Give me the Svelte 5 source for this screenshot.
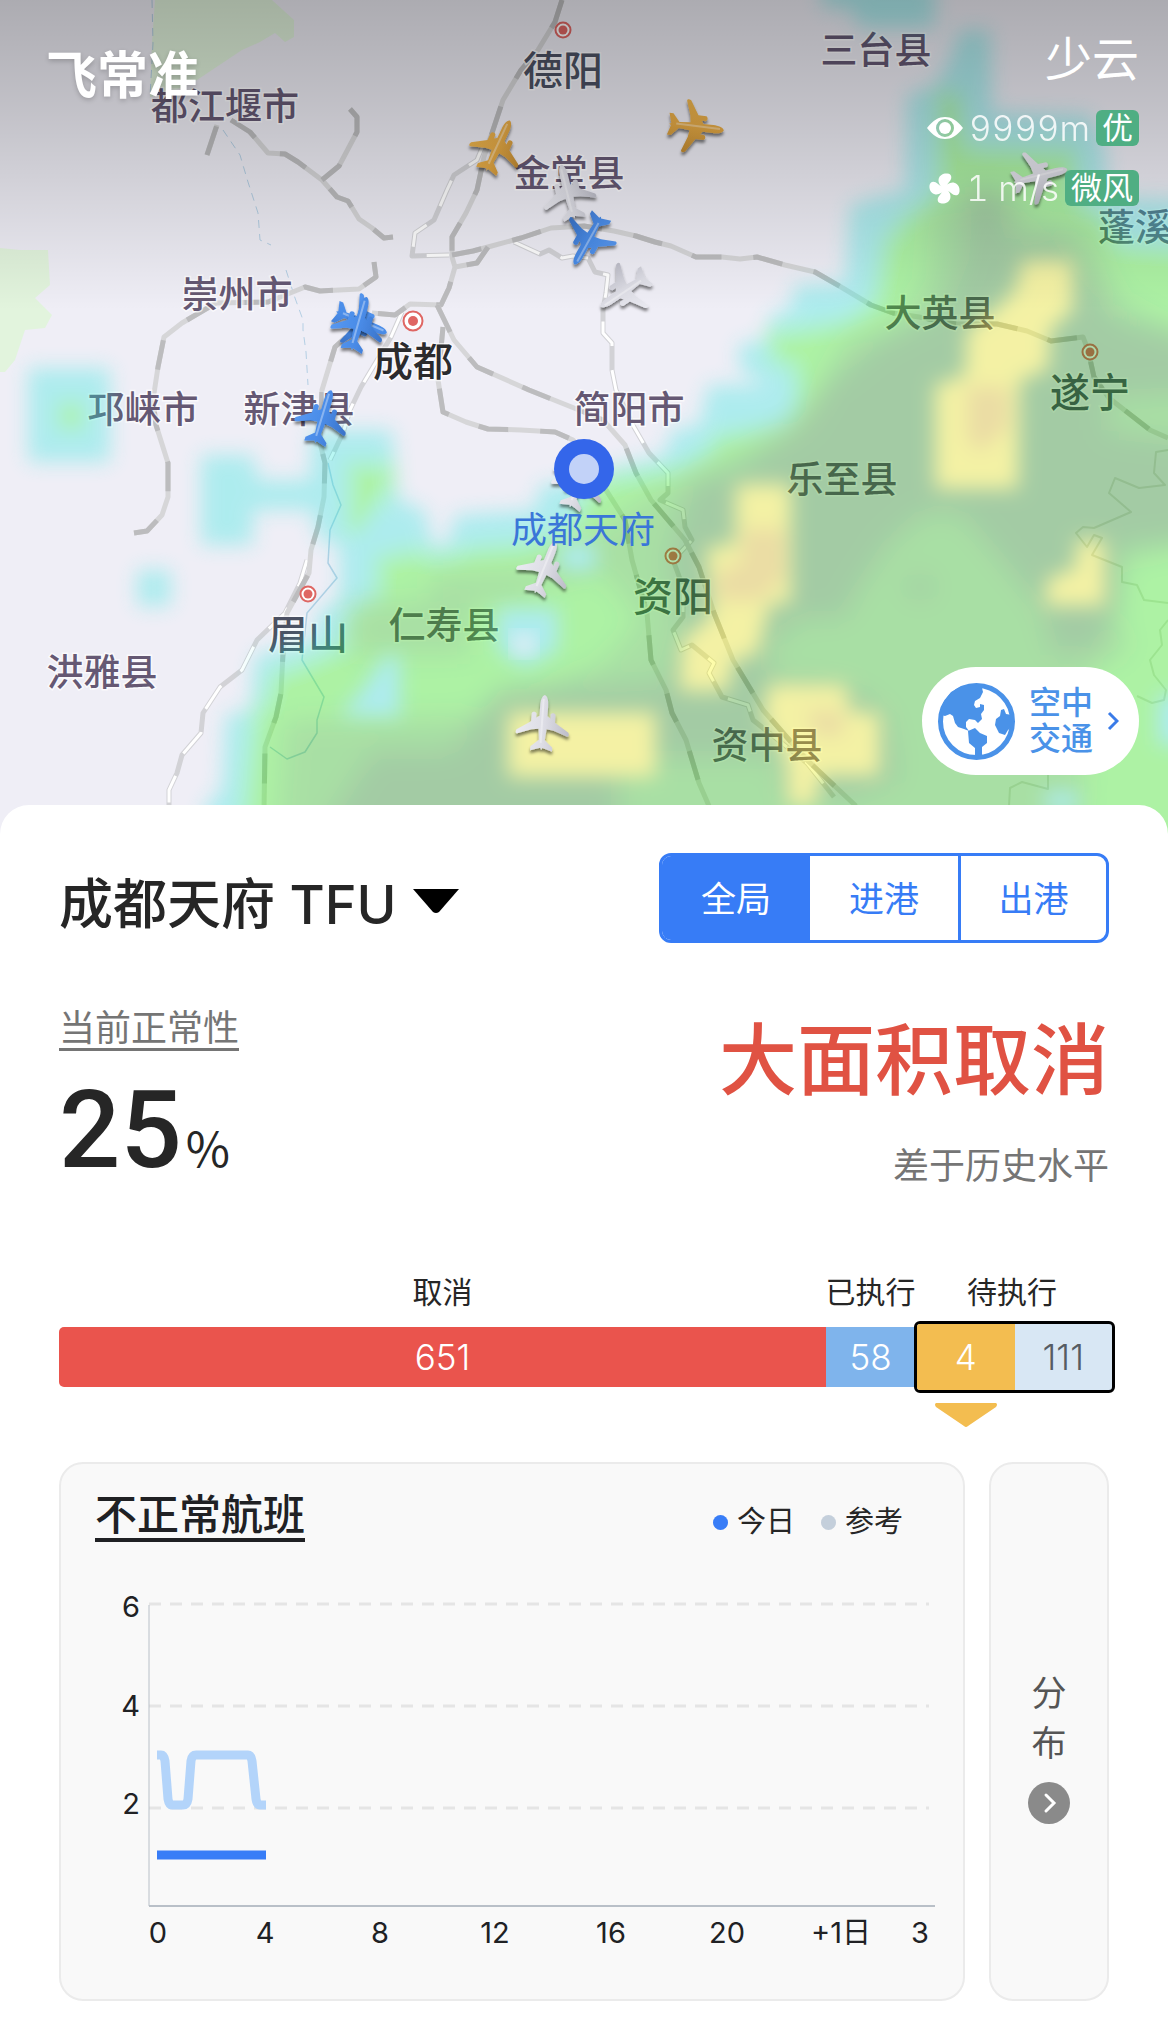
<script>
let activeTab = $state('全局')
const tabs = ['全局', '进港', '出港']

// county = small label, city = larger label with a dot
const counties = [
    ['三台县', 876, 51], ['都江堰市', 225, 107], ['金堂县', 569, 174], ['崇州市', 237, 295],
    ['邛崃市', 143, 410], ['新津县', 299, 410], ['简阳市', 629, 410], ['大英县', 940, 314],
    ['蓬溪', 1135, 228], ['乐至县', 842, 480], ['仁寿县', 444, 626], ['洪雅县', 102, 673],
    ['资中县', 767, 746]
]
const cities = [
    { name: '德阳', x: 563, y: 70, dot: [563, 30] },
    { name: '遂宁', x: 1090, y: 392, dot: [1090, 352] },
    { name: '资阳', x: 673, y: 596, dot: [673, 556] },
    { name: '眉山', x: 308, y: 634, dot: [308, 594] }
]

const planes = [
    { x: 498, y: 146, heading: 25, kind: 'gold' },
    { x: 696, y: 127, heading: 97, kind: 'gold' },
    { x: 568, y: 192, heading: -14, kind: 'white' },
    { x: 588, y: 240, heading: 209, kind: 'blue' },
    { x: 624, y: 291, heading: 236, kind: 'white' },
    { x: 361, y: 322, heading: 113, kind: 'blue' },
    { x: 359, y: 324, heading: 16, kind: 'blue' },
    { x: 323, y: 417, heading: 17, kind: 'blue' },
    { x: 582, y: 466, heading: 15, kind: 'white' },
    { x: 580, y: 482, heading: 22, kind: 'white' },
    { x: 545, y: 568, heading: 22, kind: 'white' },
    { x: 543, y: 723, heading: 4, kind: 'white' },
    { x: 1040, y: 176, heading: 76, kind: 'white' }
]

const roads = [
    '207,155 217,125',
    '231,120 250,132 268,153 285,154 298,162 322,180 337,197 348,201 359,219 372,228 384,238 393,237',
    '350,109 357,117 357,132 339,166 322,180',
    '562,0 555,22 538,50 521,70 503,100 493,130 484,157 477,190 466,213 452,237 452,257 455,267 449,288 441,305 410,304 395,315 372,313',
    '346,337 335,347 322,390 320,443 325,463 324,497 318,527 311,550 309,573 287,613 283,653 281,693 276,717 265,747 264,810',
    '452,255 473,251 488,247 521,238 551,228 584,226 614,231 636,236 655,242 671,246 696,257 722,257 740,259 757,257 785,265 815,272 841,287 871,305 893,313 919,317 956,324 997,324 1027,331 1051,341 1083,337 1088,350 1094,377 1109,398 1150,430 1168,438',
    '488,247 477,263 455,267',
    '437,305 454,340 477,367 529,390 584,412 603,420 625,445 636,473 651,500 685,540 699,567 714,613 733,660 763,710 807,760 856,806',
    '443,327 438,380 443,412 466,422 488,429 521,430 555,432 573,440 606,490 625,520 632,560 647,613 651,660 666,690 672,713 686,740 699,783 709,806',
    '374,262 376,277 359,289 320,291 305,287 268,302 216,303 182,323 164,337 158,367 153,400 156,425 168,463 168,497 162,515 147,531 134,533'
]
const railways = [
    '484,143 477,160 454,175 447,190 434,220 415,233 412,256 449,255',
    '402,312 391,337 361,387 350,410 343,433 330,460',
    '307,560 300,583 285,613 257,640 242,670 220,687 203,713 201,733 182,755 177,773 169,790 169,810',
    '514,242 540,254 549,250 562,258 573,256 588,258 595,272 608,275 606,293 603,310 603,333 612,343 612,370 616,390 634,427 649,453 668,473 668,493 660,500 683,510 685,527 692,540 673,560 683,587 683,617 673,630 681,650 692,645 714,663 709,673 722,697 748,705 753,720 807,763 834,797'
]
const rivers = [
    '328,463 333,485 341,505 330,530 328,563 337,578 307,613 302,660 324,697 317,720 317,733 305,752 287,759 270,747'
]
const streams = [
    '152,0 153,43 150,97',
    '223,130 240,155 248,182 258,213 260,240 271,245',
    '286,270 295,298 303,320 303,330 306,352 308,385'
]
const borders = [
    '1168,450 1156,452 1154,473 1165,485 1139,488 1115,478 1109,493 1131,512 1094,528 1083,527 1076,533 1087,547 1094,535 1102,538 1092,555 1122,567 1122,582 1137,585 1144,600 1168,603',
    '1168,620 1160,630 1162,645 1150,660 1154,675 1166,690 1164,700 1152,703 1137,696',
    '1009,806 1010,788 1022,782 1048,789 1048,775'
]

// value, line y, label baseline
const yTicks = [[6, 24, 37], [4, 126, 136], [2, 228, 234]]
const xTicks = [['0', 63], ['4', 170], ['8', 285], ['12', 400], ['16', 516], ['20', 632], ['+1日', 746], ['3', 825]]
</script>

<main>
    <section class="map">
        <svg class="map-canvas" viewBox="0 0 1168 834" preserveAspectRatio="xMidYMin slice">
            <defs>
                <filter id="soft" x="-20%" y="-20%" width="140%" height="140%">
                    <feGaussianBlur stdDeviation="10" />
                </filter>
                <filter id="softer" x="-20%" y="-20%" width="140%" height="140%">
                    <feGaussianBlur stdDeviation="14" />
                </filter>
                <filter id="drop" x="-30%" y="-30%" width="160%" height="160%">
                    <feDropShadow dx="0" dy="3" stdDeviation="1.5" flood-opacity="0.5" />
                </filter>
                <linearGradient id="shade" x1="0" y1="0" x2="0" y2="1">
                    <stop offset="0" stop-color="#000" stop-opacity="0.28" />
                    <stop offset="0.35" stop-color="#000" stop-opacity="0.19" />
                    <stop offset="1" stop-color="#000" stop-opacity="0" />
                </linearGradient>
                <linearGradient id="white" x1="0" x2="1"><stop offset="0" stop-color="#eaeaf1" /><stop offset="0.5" stop-color="#dedee6" /><stop offset="1" stop-color="#bdbdc8" /></linearGradient>
                <linearGradient id="blue" x1="0" x2="1"><stop offset="0" stop-color="#5697f0" /><stop offset="0.5" stop-color="#4a8ce8" /><stop offset="1" stop-color="#3a73c8" /></linearGradient>
                <linearGradient id="gold" x1="0" x2="1"><stop offset="0" stop-color="#edb54e" /><stop offset="0.5" stop-color="#e6aa45" /><stop offset="1" stop-color="#c48d34" /></linearGradient>
                <path id="plane" d="M0-28C3-27 4-22 4-17V-7L7-5V-9C8-11 11-11 12-9V-1L26 8C27 10 27 12 25 12L11 7L4 6L3 17L11 24V28L1 25L0 27L-1 25L-11 28V24L-3 17L-4 6L-11 7L-25 12C-27 12-27 10-26 8L-12-1V-9C-11-11-8-11-7-9V-5L-4-7V-17C-4-22-3-27 0-28Z" />
            </defs>

            <rect width="1168" height="834" fill="#efeef6" />
            <path fill="#e2f4dd" d="M155 0H272L294 20V37L285 42L275 33L260 42L242 50L197 80L170 93L150 97L152 43ZM0 248L20 250L48 250L50 285L35 298L52 315L45 328L25 330L15 360L5 372H0Z" />

            {#each rivers as points}<polyline class="river" {points} />{/each}
            {#each streams as points}<polyline class="stream" {points} />{/each}
            {#each borders as points}<polyline class="border" {points} />{/each}
            {#each railways as points}
                <polyline class="rail-edge" {points} />
                <polyline class="rail" {points} />
            {/each}
            {#each roads as points}
                <polyline class="road" {points} />
                <polyline class="road-dash" {points} />
            {/each}

            {#each cities as city}
                <g class="dot" transform="translate({city.dot[0]} {city.dot[1]})"><circle r="7.500" /><circle class="core" r="4.500" /></g>
                <text class="city" x={city.x} y={city.y + 15}>{city.name}</text>
            {/each}
            {#each counties as [name, x, y]}
                <text class="county" {x} y={y + 13}>{name}</text>
            {/each}
            <g class="dot" transform="translate(413 321)"><circle r="9.500" /><circle class="core" r="5" /></g>
            <text class="capital" x="413" y="376">成都</text>

            <!-- rain radar -->
            <g opacity="0.33">
                <g filter="url(#soft)">
                    <path fill="#2ae8e0" d="M28 368H110V462H28ZM822-20H935V28H860L850 8H822ZM137 570H171V606H137Z" />
                    <path fill="#2ae8e0" d="M960 30H990L992 112L1090 115L1105 150L1108 197L1200 200V860H205V806L222 790L226 715L250 710L255 655L315 640L318 612L340 600V545L318 540L312 510H253V545H201V455H253L258 480H310L312 430H392L398 500L425 510L432 545H448L455 515L535 510L540 485L600 480V470L665 455L672 430L700 425L708 385H768L740 370L738 345L766 340L770 315L790 310L795 285L845 283L850 205L882 195L905 190L907 95L935 85L950 60Z" />
                    <path fill="#2afd00" d="M56 400H86V432H56ZM345 460H394V492L372 517L360 535H345Z" />
                    <path fill="#2afd00" d="M935 90H962L970 142L1078 146L1084 200L1110 215L1120 240L1200 245V860H235L240 800L250 715L262 700L270 670L300 660L345 640L350 615L372 600L374 555L415 545L440 555L470 545L530 540L570 520L578 495L600 475L680 465L705 450L715 432L785 425L795 400L790 370L768 365L765 330L845 318L870 300L880 240L900 215L932 195Z" />
                </g>
                <g filter="url(#softer)">
                    <path fill="#1bc300" d="M930 210L1010 190L1030 220L1090 230L1120 300L1200 340V545L1125 560L1110 600L1130 650L1090 670L1080 860H275L285 720L490 715L500 700L600 665L640 620L600 570L530 590V600L470 605V655H350V605L430 600V575L530 570L600 530L640 500L740 450L800 420L845 340L900 320L925 280Z" />
                    <path fill="#098700" d="M965 190H1000L1015 240L1060 235L1090 280L1120 320L1200 340V395L1110 400V430L1200 440V540L1120 548V600L1098 655H1050L1040 610L990 550L960 515H925L890 545L860 590L845 620H800L780 640L775 680L850 680L890 715L900 780L850 800L640 800L600 860H300L372 750H450L500 690L665 680L680 620L665 560L690 480L735 470L790 430L830 380L880 340L940 310L960 260Z" />
                    <path fill="#1bc300" d="M770 640H860V690L770 670ZM620 760H780V840H620Z" />
                    <circle cx="920" cy="587" r="14" fill="#098700" />
                </g>
                <g filter="url(#soft)">
                    <path fill="#2ae8e0" d="M340 716L362 690L385 656H400V717ZM497 608H558V650L525 668L497 650ZM560 544H596V570H560ZM1158 695H1190V745H1158ZM1045 792H1078V810H1045Z" />
                    <path fill="#fffa00" d="M1023 260H1073V310L1050 330L1048 370L1020 380L1018 489H935V385L965 375L967 330L995 310L1015 290Z" />
                    <path fill="#fffa00" d="M736 484H791V604H770L757 655L733 660L728 691H679L682 640L712 615L706 548L735 543ZM768 684H846L851 712H880V776H820L815 806H788L786 760L763 720ZM508 712H656V777H508ZM1076 540H1105V606H1044L1048 578L1076 568Z" />
                    <path fill="#e3ba00" d="M966 386H1010V427L980 454L966 440ZM741 528H786V578L760 602H716V570L741 563ZM803 710H844V737H818Z" />
                </g>
            </g>
            <circle cx="524" cy="644" r="11" fill="#efeef6" filter="url(#soft)" />

            {#each planes as plane}
                <g filter="url(#drop)">
                    <g transform="translate({plane.x} {plane.y}) rotate({plane.heading})">
                        <use href="#plane" fill="url(#{plane.kind})" />
                        <path d="M-1-24V20" class="shine" />
                    </g>
                </g>
            {/each}

            <circle cx="584" cy="469" r="30" fill="#3466ea" />
            <circle cx="584" cy="469" r="15" fill="#c2d2f8" />
            <text class="airport" x="583" y="543">成都天府</text>

            <rect width="1168" height="310" fill="url(#shade)" />
        </svg>

        <header class="overlay">
            <div class="brand">飞常准</div>
            <div class="weather">
                <div class="sky">少云</div>
                <div class="reading">
                    <svg width="36" height="24" viewBox="0 0 36 24">
                        <path fill="#fff" fill-rule="evenodd" d="M0 12C6 4 12 1 18 1S30 4 36 12C30 20 24 23 18 23S6 20 0 12ZM18 3A9 9 0 1 0 18 21A9 9 0 1 0 18 3Z" />
                        <circle cx="18" cy="12" r="6" fill="#fff" />
                    </svg>
                    <span>9999m</span>
                    <b>优</b>
                </div>
                <div class="reading">
                    <svg width="31" height="31" viewBox="-16 -16 32 32" fill="#fff">
                        {#each [0, 90, 180, 270] as turn}
                            <path transform="rotate({turn})" d="M-1 1C-4-2-7-6-6-10C-5-14-1-16 3-15.500C8-15 8-10 5-7C3-5 2-3 1 1Z" />
                        {/each}
                    </svg>
                    <span>1 m/s</span>
                    <b>微风</b>
                </div>
            </div>
        </header>

        <button class="traffic">
            <svg width="77" height="77" viewBox="0 0 77 77" fill="#4a92e8">
                <circle cx="38.500" cy="38.500" r="36" fill="none" stroke="#4a92e8" stroke-width="5" />
                <path d="M3 32L5 20L13 9L24 3L38 2L44 5L45 9L42 15L37 18L36 22L38 25L42 24V21L46 22V27L43 31L44 36L40 40L37 37L31 36L28 39V44L31 48L26 46L20 44L17 40L15 33L12 31L7 33Z" />
                <path d="M30 48L37 45L42 50L49 53V60L44 64V74H37V65L31 60Z" />
                <path d="M63 27L66 26L68 31L74 32V44L70 47L67 52L61 50L57 42L58 36L62 33Z" />
            </svg>
            <span>空中<br />交通</span>
            <svg width="12" height="20" viewBox="0 0 12 20"><path d="M2 2L10 10L2 18" fill="none" stroke="#3a7be8" stroke-width="3" /></svg>
        </button>
    </section>

    <section class="sheet">
        <div class="title-row">
            <h1>
                <button class="picker">成都天府 TFU
                    <svg width="46" height="24" viewBox="0 0 46 24"><path d="M0 0H46L26 23Q23 25 20 23Z" /></svg>
                </button>
            </h1>
            <div class="tabs">
                {#each tabs as tab}
                    <button class:active={activeTab === tab} onclick={() => activeTab = tab}>{tab}</button>
                {/each}
            </div>
        </div>

        <div class="status">
            <div>
                <a href="#rate">当前正常性</a>
                <div class="rate">25<small>%</small></div>
            </div>
            <div class="verdict">
                <h2>大面积取消</h2>
                <p>差于历史水平</p>
            </div>
        </div>

        <div class="flights">
            <div class="columns captions">
                <span>取消</span><span>已执行</span><span>待执行</span>
            </div>
            <div class="columns bar">
                <div class="cancelled">651</div>
                <div class="done">58</div>
                <div class="pending">
                    <div class="late">4</div>
                    <div class="planned">111</div>
                </div>
            </div>
            <div class="columns">
                <div class="pointer">
                    <svg width="62" height="24" viewBox="0 0 62 24"><path fill="#f3bd50" d="M1 0H61Q63 1 61 4L33 23Q31 25 29 23L1 4Q-1 1 1 0Z" /></svg>
                </div>
            </div>
        </div>

        <div class="cards">
            <div class="card chart">
                <div class="chart-head">
                    <h3><a href="#delays">不正常航班</a></h3>
                    <div class="legend">
                        <span><i class="today"></i>今日</span>
                        <span><i></i>参考</span>
                    </div>
                </div>
                <svg viewBox="0 0 840 380">
                    {#each yTicks as [label, y, baseline]}
                        <line class="grid" x1="54" x2="834" y1={y} y2={y} />
                        <text x="45" y={baseline} text-anchor="end">{label}</text>
                    {/each}
                    <line class="axis" x1="54" x2="54" y1="25" y2="326" stroke-width="1" />
                    <line class="axis" x1="54" x2="840" y1="326" y2="326" stroke-width="2" />
                    <path class="series reference" d="M62 175H66Q69 175 70 181L73 219Q74 225 77 225H88Q92 225 93 219L96 181Q97 175 101 175H153Q156 175 157 181L161 219Q162 225 165 225H171" />
                    <path class="series" d="M62 275H171" />
                    {#each xTicks as [label, x]}
                        <text {x} y="363" text-anchor="middle">{label}</text>
                    {/each}
                </svg>
            </div>
            <button class="card more">
                <span>分<br />布</span>
                <svg width="42" height="42" viewBox="0 0 42 42"><circle cx="21" cy="21" r="21" fill="#8a8a8a" /><path d="M18 13L26 21L18 29" fill="none" stroke="#fff" stroke-width="3" stroke-linecap="round" /></svg>
            </button>
        </div>
    </section>
</main>

<style>
:global(body) {
    background: #fff;
}
main {
    font-family: Inter, "Noto Sans CJK SC", sans-serif;
    color: #262626;
}
h1, h2, h3, p {
    margin: 0;
    font-weight: 500;
}
button {
    font: inherit;
    color: inherit;
    background: none;
    border: 0;
    padding: 0;
    cursor: pointer;
}
svg {
    display: block;
    flex: none;
}
a {
    color: inherit;
    text-decoration: none;
}

/* map */
.map {
    position: relative;
    overflow: hidden;
}
.map-canvas {
    width: 100%;
    height: 834px;
}
polyline {
    fill: none;
    stroke-linejoin: round;
}
.road {
    stroke: #d6d6d8;
    stroke-width: 5;
}
.road-dash {
    stroke: #bcbcbe;
    stroke-width: 5;
    stroke-dasharray: 30 32;
}
.rail-edge {
    stroke: #d2d2d6;
    stroke-width: 5;
}
.rail {
    stroke: #fff;
    stroke-width: 3;
    stroke-dasharray: 28 24;
}
.river {
    stroke: #b4cfe4;
    stroke-width: 1.5;
}
.stream {
    stroke: #b4cfe4;
    stroke-width: 1;
    stroke-dasharray: 8 6;
}
.border {
    stroke: #d6d8d8;
    stroke-width: 2;
}
.dot circle {
    fill: #fff;
    stroke: #df6663;
    stroke-width: 2;
}
.dot .core {
    fill: #df6663;
    stroke: none;
}
.map-canvas text {
    font-family: "Noto Sans CJK SC", sans-serif;
    font-weight: 500;
    text-anchor: middle;
    paint-order: stroke;
    stroke: rgba(255, 255, 255, 0.7);
    stroke-width: 3px;
}
.map-canvas .county {
    font-size: 37px;
    fill: #655873;
}
.map-canvas .city {
    font-size: 40px;
    fill: #4c5163;
}
.map-canvas .capital {
    font-size: 40px;
    fill: #2b2b2d;
}
.map-canvas .airport {
    font-size: 36px;
    font-weight: 400;
    fill: #3a76d8;
    stroke: none;
}
.shine {
    stroke: rgba(255, 255, 255, 0.35);
    stroke-width: 2;
}
.overlay {
    position: absolute;
    inset: 0 29px auto 46px;
    display: flex;
    justify-content: space-between;
    color: #fff;
}
.brand {
    margin-top: 40px;
    font-size: 51px;
    line-height: 72px;
    font-weight: 700;
    text-shadow: 0 2px 5px rgba(0, 0, 0, 0.2);
}
.weather {
    display: flex;
    flex-direction: column;
    align-items: flex-end;
    gap: 24px;
    margin-top: 32px;
    font-weight: 300;
}
.sky {
    font-size: 47px;
    line-height: 54px;
    font-weight: 400;
}
.reading {
    display: flex;
    align-items: center;
    gap: 6px;
    font-size: 35px;
    line-height: 36px;
    font-variant-numeric: tabular-nums;
}
.reading span {
    opacity: 0.85;
}
.reading b {
    padding: 0 6px;
    border-radius: 6px;
    background: #4fae83;
    font-size: 31px;
    font-weight: 400;
}
.traffic {
    position: absolute;
    right: 29px;
    bottom: 59px;
    display: flex;
    align-items: center;
    gap: 14px;
    height: 108px;
    padding: 0 20px 0 16px;
    border-radius: 54px;
    background: #fff;
    color: #4a92e8;
    font-size: 32px;
    line-height: 36px;
    font-weight: 500;
}

/* sheet */
.sheet {
    position: relative;
    margin-top: -29px;
    padding: 48px 59px 33px;
    border-radius: 29px 29px 0 0;
    background: #fff;
}
.title-row {
    display: flex;
    align-items: center;
    justify-content: space-between;
}
.picker {
    display: flex;
    align-items: center;
    gap: 17px;
    padding-top: 14px;
    font-size: 54px;
    line-height: 72px;
}
.picker svg {
    margin-bottom: 8px;
}
.tabs {
    display: grid;
    grid-template-columns: repeat(3, 1fr);
    width: 450px;
    height: 90px;
    box-sizing: border-box;
    border: 3px solid #377cf6;
    border-radius: 12px;
    overflow: hidden;
    color: #377cf6;
    font-size: 35px;
}
.tabs button {
    padding-bottom: 3px;
}
.tabs button:last-child {
    border-left: 3px solid #377cf6;
}
.tabs .active {
    background: #377cf6;
    color: #fff;
}
.status {
    display: flex;
    justify-content: space-between;
    margin-top: 64px;
}
.status a {
    display: inline-block;
    padding-top: 2px;
    border-bottom: 3px solid #757575;
    color: #757575;
    font-size: 36px;
    line-height: 39px;
}
.rate {
    margin-top: 25px;
    font-family: Roboto, sans-serif;
    font-size: 108px;
    line-height: 108px;
    font-weight: 500;
}
.rate small {
    margin-left: 4px;
    font-family: "Noto Sans CJK SC", sans-serif;
    font-size: 48px;
    line-height: 48px;
    font-weight: 400;
}
.verdict {
    padding-top: 4px;
    text-align: right;
}
.verdict h2 {
    color: #e05243;
    font-size: 78px;
    line-height: 100px;
}
.verdict p {
    margin-top: 30px;
    color: #757575;
    font-size: 36px;
    line-height: 50px;
    font-weight: 400;
}
.flights {
    margin-top: 81px;
}
.columns {
    display: grid;
    grid-template-columns: 767fr 89fr 194fr;
}
.captions {
    justify-items: center;
    font-size: 30px;
    line-height: 40px;
}
.captions span {
    display: flex;
    justify-content: center;
    width: 0;
    white-space: nowrap;
}
.bar {
    height: 60px;
    margin-top: 15px;
    color: #fff;
    font-size: 35px;
    font-weight: 300;
}
.bar div {
    display: flex;
    align-items: center;
    justify-content: center;
}
.bar .cancelled {
    background: #ea544d;
    border-radius: 5px 0 0 5px;
}
.bar .done {
    background: #7fb4ec;
}
.bar .pending {
    display: grid;
    grid-template-columns: 1fr 1fr;
    align-items: stretch;
    justify-content: stretch;
    margin: -6px -6px -6px -1px;
    border: 3px solid #000;
    border-radius: 6px;
    overflow: hidden;
    background: #d8e7f4;
}
.bar .late {
    background: #f3bd50;
}
.bar .planned {
    color: #555c63;
}
.pointer {
    grid-column: 3;
    display: flex;
    justify-content: center;
    width: 53%;
    margin-top: 16px;
}
.cards {
    display: flex;
    gap: 24px;
    margin-top: 35px;
}
.card {
    box-sizing: border-box;
    border: 2px solid #ebebeb;
    border-radius: 24px;
    background: #f9f9f9;
}
.chart {
    flex: 1;
    padding: 28px 28px 39px 34px;
}
.chart-head {
    display: flex;
    align-items: center;
    justify-content: space-between;
    padding-right: 32px;
    margin-bottom: 38px;
}
.chart h3 a {
    display: block;
    border-bottom: 4px solid #202124;
    color: #202124;
    font-size: 42px;
    line-height: 46px;
}
.legend {
    display: flex;
    gap: 26px;
    padding-top: 10px;
    font-size: 29px;
    line-height: 40px;
}
.legend span {
    display: flex;
    align-items: center;
    gap: 9px;
}
.legend i {
    width: 15px;
    height: 15px;
    border-radius: 50%;
    background: #c4cfdb;
}
.legend .today {
    background: #387df7;
}
.chart svg {
    width: 100%;
}
.chart text {
    font-size: 29px;
    fill: #202124;
}
.grid {
    stroke: #e5e5e5;
    stroke-width: 3;
    stroke-dasharray: 12 9;
}
.axis {
    stroke: #b9c0c8;
}
.series {
    fill: none;
    stroke: #387df7;
    stroke-width: 9;
}
.series.reference {
    stroke: #b3d4fa;
}
.more {
    display: flex;
    flex-direction: column;
    align-items: center;
    justify-content: center;
    gap: 14px;
    width: 120px;
    padding-top: 28px;
    color: #555;
    font-size: 35px;
    line-height: 50px;
}
</style>
